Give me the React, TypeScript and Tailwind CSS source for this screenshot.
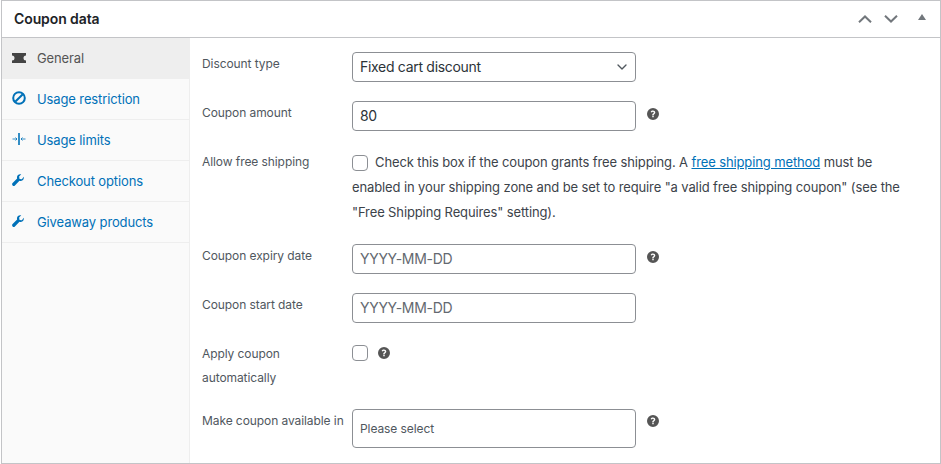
import { ChevronDown } from "lucide-react";

const blue = "text-[#0071b8]";

function Help() {
  return (
    <svg viewBox="0 0 20 20" className="w-[12px] h-[12px] shrink-0 fill-[#555]">
      <path
        fillRule="evenodd"
        d="M10 0a10 10 0 1 1 0 20a10 10 0 0 1 0-20zM11.200 15.600v-2.500H8.800v2.500zM13.800 7.600c0-2.200-1.700-3.400-3.800-3.400c-1.800 0-3.200.8-3.900 2.400l2 1.100c.3-.8.9-1.300 1.800-1.300c.9 0 1.500.5 1.500 1.200c0 .7-.5 1-1.200 1.500c-.9.6-1.500 1.200-1.500 2.500v.4h2.400v-.2c0-.6.3-.9 1-1.400c1-.7 1.700-1.400 1.700-2.800z"
      />
    </svg>
  );
}

function Ticket() {
  return (
    <svg viewBox="0 0 14 10" className="w-[14px] h-[10px] fill-[#444]">
      <path d="M0 0h14v2.500a2.500 2.500 0 0 0 0 5V10H0V7.500a2.500 2.500 0 0 0 0-5z" />
    </svg>
  );
}

function Ban() {
  return (
    <svg viewBox="0 0 14 14" className="w-[14px] h-[14px] fill-none stroke-[#0071b8]" strokeWidth="2">
      <circle cx="7" cy="7" r="5.800" />
      <path d="M3.200 10.800L10.800 3.200" />
    </svg>
  );
}

function Limits() {
  return (
    <svg viewBox="0 0 14 14" className="w-[14px] h-[14px] fill-none stroke-[#0071b8]" strokeWidth="0.8">
      <path d="M0.500 7H5M9 7H13.500M6.500 1V13M7.500 1V13" />
      <path d="M3.500 5.500L5 7L3.500 8.500M10.500 5.500L9 7L10.500 8.500" />
    </svg>
  );
}

function Wrench() {
  return (
    <svg viewBox="0 0 14 14" className="w-[12px] h-[12px] fill-[#0071b8]">
      <path d="M13.600 3.200c.5 1.700 0 3.200-1.200 4.200c-1.100.9-2.500 1-3.700.6L3.400 13.300c-.8.8-1.900.8-2.700 0c-.8-.8-.8-1.900 0-2.700L6 5.300c-.4-1.200-.2-2.600.7-3.700C7.700.4 9.200-.1 10.800.4L8.300 2.900l.5 2.800 2.800.5z" />
    </svg>
  );
}

function Tab({ icon, label, active }: { icon: React.ReactNode; label: string; active?: boolean }) {
  return (
    <div
      className={`h-[41px] flex items-center pl-[10px] ${
        active ? "bg-[#eeeeee] text-[#555]" : `border-b border-[#eeeeee] ${blue}`
      }`}
    >
      <span className="w-[25px] flex -mt-[2px]">{icon}</span>
      <span className="tracking-[-0.12px] mt-[1px]">{label}</span>
    </div>
  );
}

function Row({ label, height, children }: { label: React.ReactNode; height: string; children: React.ReactNode }) {
  return (
    <div className={`flex ${height}`}>
      <div className="w-[150px] shrink-0 leading-[24px] text-[#50575e] text-[12px] tracking-[-0.08px]">{label}</div>
      <div className="flex-1 flex items-start">{children}</div>
    </div>
  );
}

function Field({ value, placeholder }: { value?: string; placeholder?: boolean }) {
  return (
    <div
      className={`w-[284px] h-[30px] border border-[#8c8f94] rounded-[4px] pl-[7px] pb-[1px] flex items-center text-[14px] tracking-[-0.3px] ${
        placeholder ? "text-[#646970]" : "text-[#2c3338]"
      }`}
    >
      {value}
    </div>
  );
}

export default function App() {
  return (
    <div className="w-[941px] h-[464px] bg-white font-['Inter','Liberation_Sans',sans-serif] text-[13px] overflow-hidden">
      <div className="h-[464px] ml-[1px] border border-[#c3c4c7] flex flex-col">
        <div className="h-[37px] shrink-0 border-b border-[#c3c4c7] flex items-center pl-[12px] pr-[14px]">
          <h2 className="text-[14px] font-semibold text-[#1d2327] flex-1 tracking-[-0.1px] -mt-[2px]">Coupon data</h2>
          <svg viewBox="0 0 14 8" className="w-[14px] h-[8px] fill-none stroke-[#72777c]" strokeWidth="2">
            <path d="M1 7.300L7 1.500L13 7.300" />
          </svg>
          <svg viewBox="0 0 14 8" className="w-[14px] h-[8px] ml-[12px] fill-none stroke-[#72777c]" strokeWidth="2">
            <path d="M1 .7L7 6.500L13 .7" />
          </svg>
          <svg viewBox="0 0 8 6" className="w-[8px] h-[6px] ml-[20px] fill-[#72777c] -mt-[4px]">
            <path d="M4 0L8 6H0z" />
          </svg>
        </div>
        <div className="flex-1 flex min-h-0">
          <div className="w-[188px] shrink-0 bg-[#fafafa] border-r border-[#eeeeee]">
            <Tab icon={<Ticket />} label="General" active />
            <Tab icon={<Ban />} label="Usage restriction" />
            <Tab icon={<Limits />} label="Usage limits" />
            <Tab icon={<Wrench />} label="Checkout options" />
            <Tab icon={<Wrench />} label="Giveaway products" />
          </div>
          <div className="flex-1 pl-[12px] pt-[14px]">
            <Row label="Discount type" height="h-[49px]">
              <div className="w-[284px] h-[30px] border border-[#8c8f94] rounded-[4px] pl-[7px] pr-[5px] pb-[1px] flex items-center justify-between text-[14px] tracking-[-0.3px] text-[#2c3338]">
                Fixed cart discount
                <ChevronDown size={16} strokeWidth={2} className="text-[#50575e] mt-[1px]" />
              </div>
            </Row>
            <Row label="Coupon amount" height="h-[49px]">
              <Field value="80" />
              <span className="ml-[11px] mt-[7px]">
                <Help />
              </span>
            </Row>
            <Row label="Allow free shipping" height="h-[94px]">
              <div className="leading-[25px] text-[#3c434a] tracking-[-0.12px] whitespace-nowrap">
                <div className="flex items-center">
                  <span className="w-4 h-4 border border-[#8c8f94] rounded-[4px] bg-white mr-[7px]" />
                  <span>Check this box if the coupon grants free shipping. A&nbsp;</span>
                  <a className="text-[#0071b8] underline">free shipping method</a>
                  <span>&nbsp;must be</span>
                </div>
                <div>enabled in your shipping zone and be set to require "a valid free shipping coupon" (see the</div>
                <div>"Free Shipping Requires" setting).</div>
              </div>
            </Row>
            <Row label="Coupon expiry date" height="h-[49px]">
              <Field value="YYYY-MM-DD" placeholder />
              <span className="ml-[11px] mt-[7px]">
                <Help />
              </span>
            </Row>
            <Row label="Coupon start date" height="h-[49px]">
              <Field value="YYYY-MM-DD" placeholder />
            </Row>
            <Row label={<>Apply coupon<br />automatically</>} height="h-[67px]">
              <div className="flex items-center mt-[3px]">
                <span className="w-4 h-4 border border-[#8c8f94] rounded-[4px] bg-white" />
                <span className="ml-[10px]">
                  <Help />
                </span>
              </div>
            </Row>
            <Row label="Make coupon available in" height="h-[40px]">
              <div className="w-[284px] h-[39px] border border-[#8c8f94] rounded-[4px] pl-[7px] flex items-center text-[12px] tracking-[-0.08px] text-[#50575e]">
                Please select
              </div>
              <span className="ml-[11px] mt-[6px]">
                <Help />
              </span>
            </Row>
          </div>
        </div>
      </div>
    </div>
  );
}
